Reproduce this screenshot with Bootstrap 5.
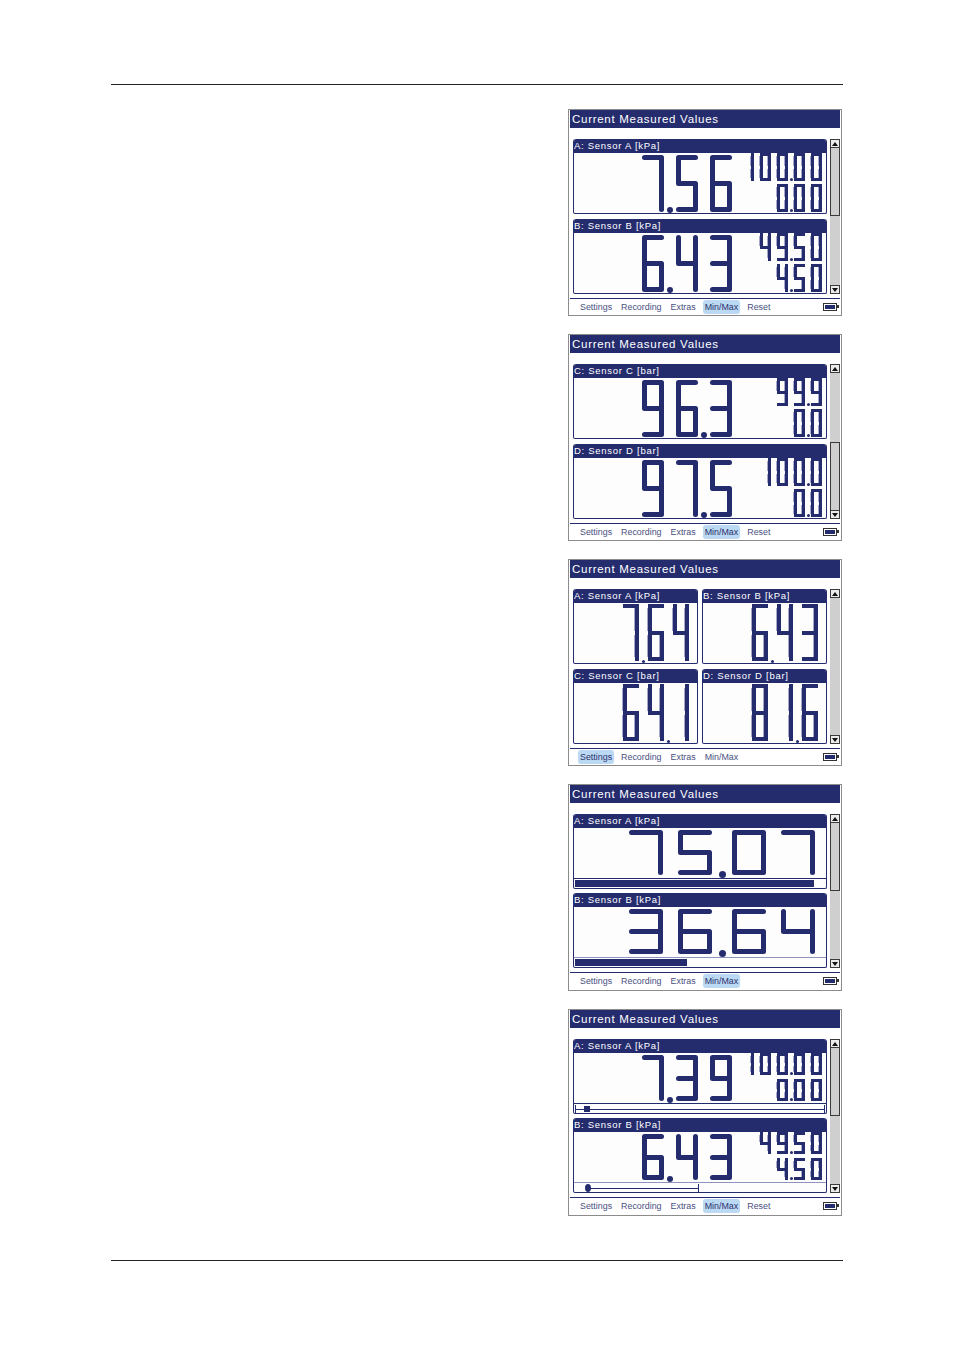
<!DOCTYPE html>
<html lang="en">
<head>
<meta charset="utf-8">
<title>Current Measured Values</title>
<link href="https://cdn.jsdelivr.net/npm/bootstrap@5.3.0/dist/css/bootstrap.min.css" rel="stylesheet">
<style>
:root{--navy:#252c6e;}
body{background:#fff;margin:0;font-family:"Liberation Sans",Arial,sans-serif;}
.sheet{width:732px;margin:84px 0 0 111px;border-top:1px solid #222;border-bottom:1px solid #222;padding:24px 1px 43px 0;gap:18px;height:1177px;}
.scr{width:274px;height:207px;border:1px solid #8c8c8c;padding:0 1px;background:#fff;}
.scr-title{height:18px;background:var(--navy);color:#fff;font-size:11.5px;line-height:19px;letter-spacing:.72px;padding-left:2px;white-space:nowrap;}
.scr-main{margin:11px 0 4px 3px;gap:3px;}
.plist{width:254px;gap:5px;}
.plist.tight{gap:4px;}
.pgrid{width:254px;grid-template-columns:125px 125px;grid-auto-rows:75px;gap:5px 4px;}
.pnl{height:75px;border:1px solid var(--navy);border-top:0;border-radius:3px 3px 2px 2px;background:#fdfdfd;overflow:hidden;}
.pnl-head{height:14px;margin:0 -1px;background:var(--navy);color:#fff;font-size:9.5px;line-height:13px;letter-spacing:.72px;padding-left:1px;white-space:nowrap;border-radius:3px 3px 0 0;}
.read{height:60px;padding-right:4px;}
.read.short{height:50px;}
.mm{width:90px;gap:3px;}
.read.short .mm{gap:4px;}
.big{margin-top:2px;}
.grid-read{padding-right:8px;}
.grid-read .big{margin-top:1px;}
.wide-read{padding-right:11px;}
.lcd{display:flex;position:relative;}
.lcd-val{position:absolute;top:0;right:0;color:transparent;font-weight:400;font-size:var(--f);line-height:var(--h);white-space:nowrap;}
.dg{display:grid;grid-template-columns:var(--s) 1fr var(--s);grid-template-rows:var(--s) 1fr var(--s) 1fr var(--s);width:var(--w);height:var(--h);margin-left:var(--g);flex:none;}
.lcd > .dg:first-of-type{margin-left:0;}
.dg i.on{background:var(--navy);}
.dg i.v{box-shadow:var(--sh);}
.dt{flex:none;width:var(--d);height:var(--d);border-radius:50%;background:var(--navy);align-self:flex-end;margin-left:calc((var(--dg) - var(--d))/2);margin-right:calc((var(--d) - var(--dg))/2 - var(--d));}
.lcd > .dt + .dg{margin-left:var(--dg);}
.sz-xl{--w:22px;--h:57px;--s:5px;--g:12px;--dg:12px;--d:6px;--sh:none;--r:2.5px;--f:40px;}
.sz-lg{--w:22px;--h:46px;--s:5px;--g:12px;--dg:12px;--d:6px;--sh:none;--r:2.5px;--f:40px;}
.sz-wd{--w:34px;--h:45px;--s:5px;--g:15px;--dg:20px;--d:7px;--sh:none;--r:2.5px;--f:40px;}
.sz-md{--w:16px;--h:57px;--s:4px;--g:9px;--dg:9px;--d:3px;--sh:-1px 0 0 #a5a8cc;--r:0px;--f:30px;}
.sz-sm{--w:11px;--h:28px;--s:3px;--g:6px;--dg:6px;--d:3px;--sh:-1px 0 0 #a5a8cc;--r:0px;--f:20px;}
.sz-xs{--w:11px;--h:22px;--s:3px;--g:6px;--dg:6px;--d:3px;--sh:-1px 0 0 #a5a8cc;--r:0px;--f:20px;}
.foot-bar{height:10px;border-top:1px solid var(--navy);padding:1px 0 0 1px;}
.foot-bar.pale{border-top-color:#8f93bd;}
.fill{height:7px;background:var(--navy);}
.gauge{display:flow-root;height:8px;border-right:1px solid var(--navy);}
.gauge.ticked{border-left:1px solid var(--navy);}
.gauge::before{content:"";display:block;height:1px;margin-top:4px;background:var(--navy);}
.mark{top:1px;width:3px;height:6px;background:var(--navy);}
.mark.lozenge{left:-1px;top:0;height:8px;border-radius:50%;}
.vbar{width:10px;background:#cfcfcf;}
.vbtn{height:9px;flex:none;border:1px solid #3a3a3a;background:#ececec;}
.tri-up{width:0;height:0;border:3.5px solid transparent;border-top:0;border-bottom:4px solid #111;}
.tri-dn{width:0;height:0;border:3.5px solid transparent;border-bottom:0;border-top:4px solid #111;}
.thumb{height:68px;flex:none;border:1px solid #3a3a3a;border-top:0;background:#cfcfcf;}
.thumb.low{border-top:1px solid #3a3a3a;border-bottom:0;}
.menu{height:17px;border-top:1px solid var(--navy);padding:1px 3px 0 8px;gap:5px;}
.mi{height:14px;padding:0 2px;font-size:8.9px;line-height:14px;color:#4a5082;border-radius:3px;white-space:nowrap;}
.mi.act{background:#bcd9f3;color:#2b3170;}
.batt{width:14px;height:8px;border:1px solid #333;padding:1px;background:var(--navy) content-box;margin-top:3px;}
.batt::after{content:"";display:block;width:2px;height:3px;background:#333;margin-left:12px;}
</style>
</head>
<body>
<main class="sheet d-flex flex-column align-items-end">

<section class="scr d-flex flex-column">
  <div class="scr-title">Current Measured Values</div>
  <div class="scr-main d-flex">
    <div class="plist d-flex flex-column">
      <div class="pnl"><div class="pnl-head">A: Sensor A [kPa]</div>
        <div class="read d-flex justify-content-end"><div class="lcd big sz-xl">7.56</div>
        <div class="mm d-flex flex-column align-items-end"><div class="lcd sz-sm">100.00</div><div class="lcd sz-sm">0.00</div></div></div></div>
      <div class="pnl"><div class="pnl-head">B: Sensor B [kPa]</div>
        <div class="read d-flex justify-content-end"><div class="lcd big sz-xl">6.43</div>
        <div class="mm d-flex flex-column align-items-end"><div class="lcd sz-sm">49.50</div><div class="lcd sz-sm">4.50</div></div></div></div>
    </div>
    <div class="vbar d-flex flex-column"><div class="vbtn d-flex align-items-center justify-content-center"><span class="tri-up"></span></div><div class="thumb"></div><div class="flex-grow-1"></div><div class="vbtn d-flex align-items-center justify-content-center"><span class="tri-dn"></span></div></div>
  </div>
  <nav class="menu d-flex"><span class="mi">Settings</span><span class="mi">Recording</span><span class="mi">Extras</span><span class="mi act">Min/Max</span><span class="mi">Reset</span><span class="batt ms-auto"></span></nav>
</section>

<section class="scr d-flex flex-column">
  <div class="scr-title">Current Measured Values</div>
  <div class="scr-main d-flex">
    <div class="plist d-flex flex-column">
      <div class="pnl"><div class="pnl-head">C: Sensor C [bar]</div>
        <div class="read d-flex justify-content-end"><div class="lcd big sz-xl">96.3</div>
        <div class="mm d-flex flex-column align-items-end"><div class="lcd sz-sm">99.9</div><div class="lcd sz-sm">0.0</div></div></div></div>
      <div class="pnl"><div class="pnl-head">D: Sensor D [bar]</div>
        <div class="read d-flex justify-content-end"><div class="lcd big sz-xl">97.5</div>
        <div class="mm d-flex flex-column align-items-end"><div class="lcd sz-sm">100.0</div><div class="lcd sz-sm">0.0</div></div></div></div>
    </div>
    <div class="vbar d-flex flex-column"><div class="vbtn d-flex align-items-center justify-content-center"><span class="tri-up"></span></div><div class="flex-grow-1"></div><div class="thumb low"></div><div class="vbtn d-flex align-items-center justify-content-center"><span class="tri-dn"></span></div></div>
  </div>
  <nav class="menu d-flex"><span class="mi">Settings</span><span class="mi">Recording</span><span class="mi">Extras</span><span class="mi act">Min/Max</span><span class="mi">Reset</span><span class="batt ms-auto"></span></nav>
</section>

<section class="scr d-flex flex-column">
  <div class="scr-title">Current Measured Values</div>
  <div class="scr-main d-flex">
    <div class="pgrid d-grid">
      <div class="pnl"><div class="pnl-head">A: Sensor A [kPa]</div><div class="read grid-read d-flex justify-content-end"><div class="lcd big sz-md">7.64</div></div></div>
      <div class="pnl"><div class="pnl-head">B: Sensor B [kPa]</div><div class="read grid-read d-flex justify-content-end"><div class="lcd big sz-md">6.43</div></div></div>
      <div class="pnl"><div class="pnl-head">C: Sensor C [bar]</div><div class="read grid-read d-flex justify-content-end"><div class="lcd big sz-md">64.1</div></div></div>
      <div class="pnl"><div class="pnl-head">D: Sensor D [bar]</div><div class="read grid-read d-flex justify-content-end"><div class="lcd big sz-md">81.6</div></div></div>
    </div>
    <div class="vbar d-flex flex-column"><div class="vbtn d-flex align-items-center justify-content-center"><span class="tri-up"></span></div><div class="flex-grow-1"></div><div class="vbtn d-flex align-items-center justify-content-center"><span class="tri-dn"></span></div></div>
  </div>
  <nav class="menu d-flex"><span class="mi act">Settings</span><span class="mi">Recording</span><span class="mi">Extras</span><span class="mi">Min/Max</span><span class="batt ms-auto"></span></nav>
</section>

<section class="scr d-flex flex-column">
  <div class="scr-title">Current Measured Values</div>
  <div class="scr-main d-flex">
    <div class="plist tight d-flex flex-column">
      <div class="pnl"><div class="pnl-head">A: Sensor A [kPa]</div>
        <div class="read short wide-read d-flex justify-content-end"><div class="lcd big sz-wd">75.07</div></div>
        <div class="foot-bar"><div class="fill" style="width:239px"></div></div></div>
      <div class="pnl"><div class="pnl-head">B: Sensor B [kPa]</div>
        <div class="read short wide-read d-flex justify-content-end"><div class="lcd big sz-wd">36.64</div></div>
        <div class="foot-bar pale"><div class="fill" style="width:112px"></div></div></div>
    </div>
    <div class="vbar d-flex flex-column"><div class="vbtn d-flex align-items-center justify-content-center"><span class="tri-up"></span></div><div class="thumb"></div><div class="flex-grow-1"></div><div class="vbtn d-flex align-items-center justify-content-center"><span class="tri-dn"></span></div></div>
  </div>
  <nav class="menu d-flex"><span class="mi">Settings</span><span class="mi">Recording</span><span class="mi">Extras</span><span class="mi act">Min/Max</span><span class="batt ms-auto"></span></nav>
</section>

<section class="scr d-flex flex-column">
  <div class="scr-title">Current Measured Values</div>
  <div class="scr-main d-flex">
    <div class="plist tight d-flex flex-column">
      <div class="pnl"><div class="pnl-head">A: Sensor A [kPa]</div>
        <div class="read short d-flex justify-content-end"><div class="lcd big sz-lg">7.39</div>
        <div class="mm d-flex flex-column align-items-end"><div class="lcd sz-xs">100.00</div><div class="lcd sz-xs">0.00</div></div></div>
        <div class="foot-bar"><div class="gauge ticked position-relative" style="width:250px"><span class="mark position-absolute" style="left:8px"></span></div></div></div>
      <div class="pnl"><div class="pnl-head">B: Sensor B [kPa]</div>
        <div class="read short d-flex justify-content-end"><div class="lcd big sz-lg">6.43</div>
        <div class="mm d-flex flex-column align-items-end"><div class="lcd sz-xs">49.50</div><div class="lcd sz-xs">4.50</div></div></div>
        <div class="foot-bar pale"><div class="gauge position-relative" style="margin-left:11px;width:113px"><span class="mark lozenge position-absolute"></span></div></div></div>
    </div>
    <div class="vbar d-flex flex-column"><div class="vbtn d-flex align-items-center justify-content-center"><span class="tri-up"></span></div><div class="thumb"></div><div class="flex-grow-1"></div><div class="vbtn d-flex align-items-center justify-content-center"><span class="tri-dn"></span></div></div>
  </div>
  <nav class="menu d-flex"><span class="mi">Settings</span><span class="mi">Recording</span><span class="mi">Extras</span><span class="mi act">Min/Max</span><span class="mi">Reset</span><span class="batt ms-auto"></span></nav>
</section>

</main>
<script>
var G={0:"111101101101111",1:"001001001001001",2:"111001111100111",3:"111001111001111",4:"101101111001001",5:"111100111001111",6:"111100111101111",7:"111001001001001",8:"111101111101111",9:"111101111001111"};
document.querySelectorAll(".lcd").forEach(function(el){
  var v=el.textContent,h='<b class="lcd-val">'+v+'</b>';
  v.split("").forEach(function(c){
    if(c==="."){h+='<span class="dt" aria-hidden="true"></span>';return;}
    var b=G[c],s='<span class="dg" aria-hidden="true">';
    for(var i=0;i<15;i++){
      var on=b[i]==="1",r=Math.floor(i/3),k=i%3,cl=on?"on":"",st="";
      if(on){
        var at=function(y,x){return y>=0&&y<5&&x>=0&&x<3&&b[y*3+x]==="1";};
        var T=at(r-1,k),B=at(r+1,k),L=at(r,k-1),R=at(r,k+1),q="var(--r)";
        st=' style="border-radius:'+(!T&&!L?q:0)+' '+(!T&&!R?q:0)+' '+(!B&&!R?q:0)+' '+(!B&&!L?q:0)+'"';
        if(r%2===1)cl+=" v";
      }
      s+='<i class="'+cl+'"'+st+'></i>';
    }
    h+=s+'</span>';
  });
  el.innerHTML=h;
});
</script>
<script src="https://cdn.jsdelivr.net/npm/bootstrap@5.3.0/dist/js/bootstrap.bundle.min.js"></script>
</body>
</html>
